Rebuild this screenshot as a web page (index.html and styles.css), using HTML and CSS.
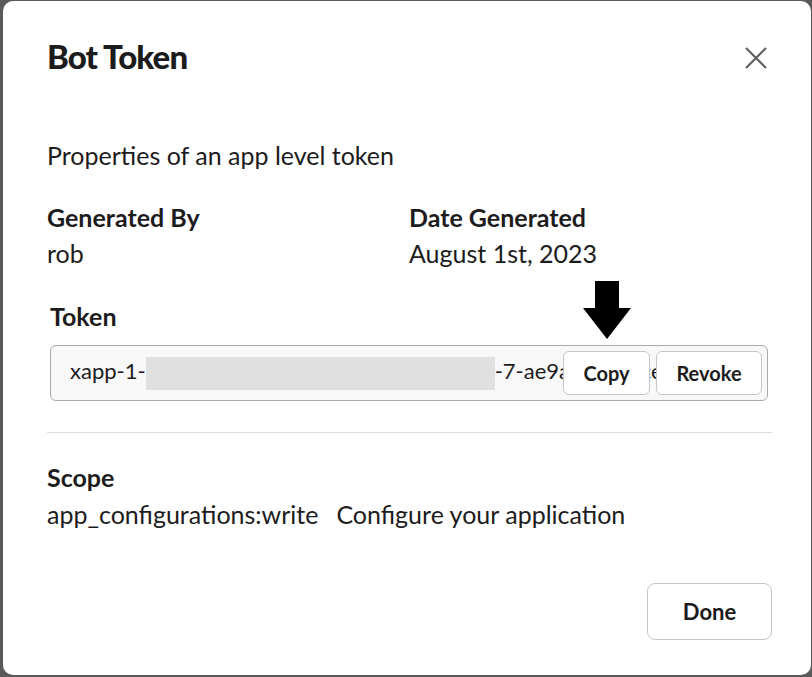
FILE: index.html
```html
<!DOCTYPE html>
<html>
<head>
<meta charset="utf-8">
<link rel="stylesheet" href="styles.css">
</head>
<body>
<div class="modal">
  <div class="header">
    <h1 class="title">Bot Token</h1>
    <button class="close" aria-label="Close">
      <svg width="24" height="24" viewBox="0 0 24 24"><path d="M2 2 L22 22 M22 2 L2 22" stroke="#616061" stroke-width="2.2" fill="none"/></svg>
    </button>
  </div>
  <p class="intro">Properties of an app level token</p>
  <div class="meta">
    <div class="meta-col">
      <div class="label">Generated By</div>
      <div class="value">rob</div>
    </div>
    <div class="meta-col">
      <div class="label">Date Generated</div>
      <div class="value">August 1st, 2023</div>
    </div>
  </div>
  <div class="token-section">
    <div class="label token-label">Token</div>
    <div class="field">
      <div class="field-text">xapp-1-<span class="redact"></span>-7-ae9a3f0bd5ce2d8b</div>
      <div class="field-actions">
        <button class="btn btn-copy">Copy</button>
        <button class="btn btn-revoke">Revoke</button>
      </div>
      <svg class="arrow" width="48" height="58" viewBox="0 0 48 58"><polygon points="12,0 36,0 36,27 48,27 24,58 0,27 12,27" fill="#000"/></svg>
    </div>
  </div>
  <hr class="divider">
  <div class="scope">
    <div class="label">Scope</div>
    <div class="scope-row"><span>app_configurations:write</span><span>Configure your application</span></div>
  </div>
  <div class="footer">
    <button class="btn done">Done</button>
  </div>
</div>
</body>
</html>
```

FILE: styles.css
```css
html, body {
  margin: 0;
  padding: 0;
  height: 100%;
}
body {
  background: #595959;
  font-family: Lato, "Open Sans", sans-serif;
  color: #1d1c1d;
  overflow: hidden;
}
.modal {
  box-sizing: border-box;
  margin: 1px 0 0 3px;
  width: 808px;
  height: 674px;
  background: #fff;
  border-radius: 10px;
  padding: 0 40px 0 44px;
  display: flex;
  flex-direction: column;
}
.header {
  display: flex;
  justify-content: space-between;
  align-items: center;
  padding-top: 36px;
}
.title {
  margin: 0;
  font-size: 33px;
  font-weight: 900;
  line-height: 38px;
  letter-spacing: -0.9px;
}
.close {
  background: none;
  border: 0;
  padding: 0;
  margin-right: 3px;
  width: 24px;
  height: 24px;
  display: flex;
  margin-top: 4px;
}
.intro {
  margin: 64px 0 0;
  font-size: 25px;
  line-height: 32px;
}
.meta {
  display: flex;
  margin-top: 29px;
}
.meta-col {
  width: 363px;
}
.label {
  font-size: 25px;
  font-weight: 700;
  line-height: 34px;
}
.value {
  font-size: 25px;
  line-height: 38px;
}
.token-section {
  margin-top: 26px;
  padding-left: 3px;
}
.token-label {
  line-height: 36px;
}
.field {
  position: relative;
  margin-top: 11px;
  box-sizing: border-box;
  width: 718px;
  height: 56px;
  border: 1px solid #a9a9a9;
  border-radius: 6px;
  background: #f8f8f8;
  display: flex;
  align-items: center;
  padding-left: 19px;
}
.field-text {
  font-size: 22px;
  white-space: nowrap;
  overflow: hidden;
  width: 690px;
  color: #1d1c1d;
}
.redact {
  display: inline-block;
  width: 349px;
  height: 37px;
  background: #e0e0e0;
  vertical-align: middle;
  margin-top: -4px;
}
.field-actions {
  position: absolute;
  right: 5px;
  top: 5px;
  display: flex;
  gap: 6px;
}
.btn {
  font-family: Lato, "Open Sans", sans-serif;
  font-size: 20px;
  font-weight: 700;
  color: #1d1c1d;
  background: #fff;
  border: 1px solid #c6c6c6;
  border-radius: 6px;
  height: 44px;
  padding: 0;
}
.btn-copy {
  width: 87px;
}
.btn-revoke {
  width: 106px;
}
.arrow {
  position: absolute;
  left: 532px;
  top: -65px;
}
.divider {
  border: 0;
  border-top: 1px solid #dddddd;
  margin: 31px 0 0;
  width: 725px;
}
.scope {
  margin-top: 27px;
}
.scope-row {
  font-size: 25px;
  line-height: 38px;
  display: flex;
  gap: 18px;
  margin-top: 1px;
}
.footer {
  display: flex;
  justify-content: flex-end;
  margin-top: 50px;
}
.btn.done {
  height: 57px;
  width: 125px;
  font-size: 22px;
  border-radius: 8px;
  margin-right: -1px;
}
```
